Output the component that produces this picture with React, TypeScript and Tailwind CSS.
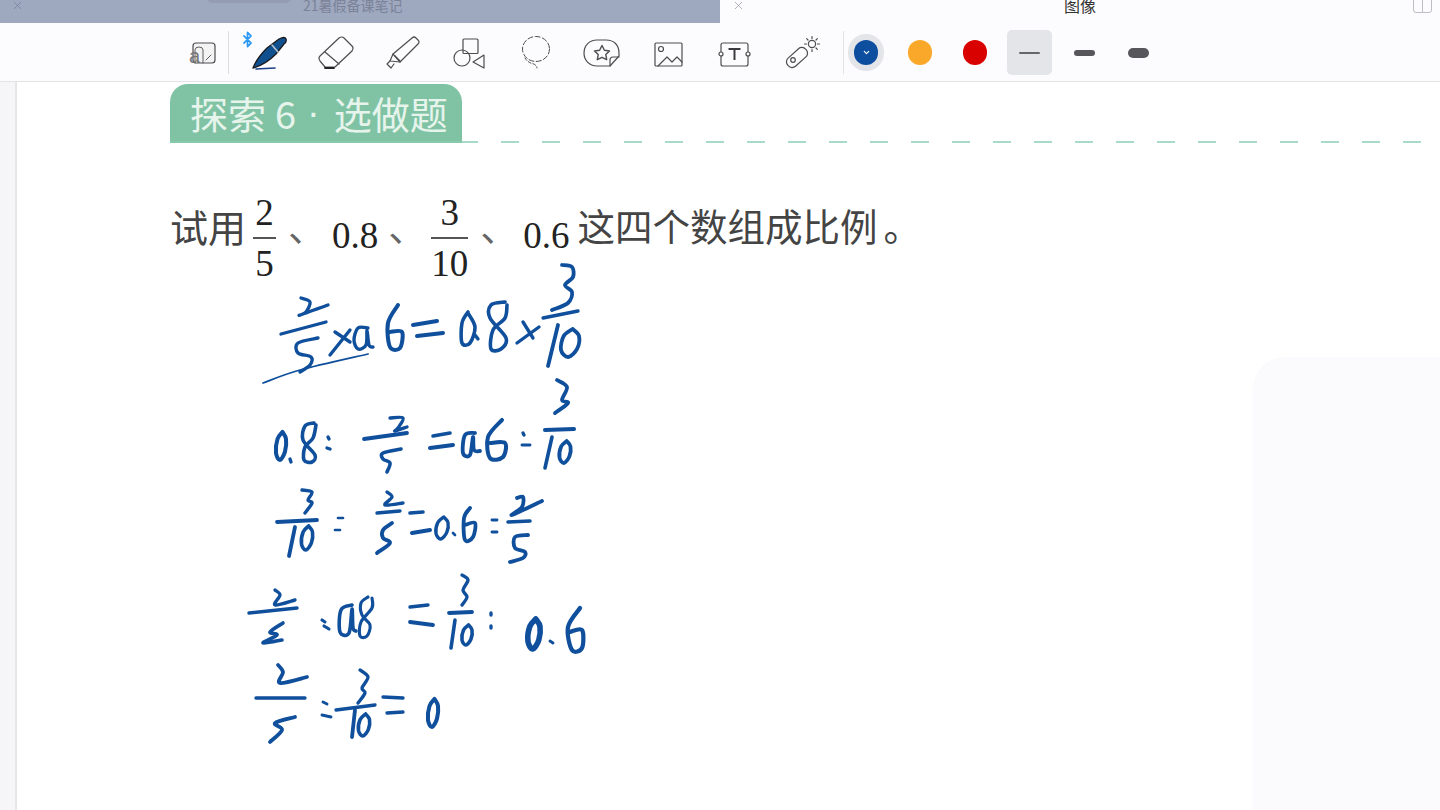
import React from "react";
import { Bluetooth, ChevronDown, X } from "lucide-react";

type P = [number, number];
const smooth = (p: P[]) => {
  if (p.length < 3) return `M${p[0][0]} ${p[0][1]} L${p[p.length - 1][0]} ${p[p.length - 1][1]}`;
  let d = `M${p[0][0]} ${p[0][1]}`;
  for (let i = 0; i < p.length - 1; i++) {
    const a = p[Math.max(0, i - 1)], b = p[i], c = p[i + 1], e = p[Math.min(p.length - 1, i + 2)];
    d += ` C${b[0] + (c[0] - a[0]) / 6} ${b[1] + (c[1] - a[1]) / 6} ${c[0] - (e[0] - b[0]) / 6} ${c[1] - (e[1] - b[1]) / 6} ${c[0]} ${c[1]}`;
  }
  return d;
};
const oval = (cx: number, cy: number, rx: number, ry: number): P[] => [
  [cx + rx * 0.3, cy - ry], [cx - rx * 0.7, cy - ry * 0.5], [cx - rx, cy + ry * 0.5], [cx - rx * 0.2, cy + ry],
  [cx + rx * 0.8, cy + ry * 0.4], [cx + rx, cy - ry * 0.5], [cx + rx * 0.3, cy - ry],
];

const strokes: { p: P[]; w?: number }[] = [
  // line 1
  { p: [[301, 298], [310, 302], [306, 312], [300, 315], [328, 305]], w: 3 },
  { p: [[281, 334], [326, 322]], w: 3 },
  { p: [[318, 338], [298, 343], [298, 353], [311, 357], [310, 365], [300, 372]], w: 3 },
  { p: [[263, 383], [300, 370], [368, 354]], w: 1.6 },
  { p: [[330, 355], [350, 330]], w: 3 },
  { p: [[335, 332], [350, 342]], w: 3 },
  { p: [[368, 328], [358, 328], [354, 340], [358, 349], [366, 345], [367, 330], [369, 345], [373, 347]], w: 3 },
  { p: [[398, 305], [388, 323], [390, 347], [400, 348], [402, 332], [390, 332]], w: 3.6 },
  { p: [[413, 325], [437, 321]], w: 3.6 },
  { p: [[417, 336], [443, 333]], w: 3.6 },
  { p: [[468, 312], [462, 323], [462, 343], [470, 343], [475, 327], [468, 313]], w: 3.2 },
  { p: [[475, 335], [478, 339]], w: 3 },
  { p: [[505, 302], [491, 305], [490, 318], [506, 338], [501, 349], [491, 349], [493, 330], [505, 318], [507, 305]], w: 3.2 },
  { p: [[517, 343], [539, 327]], w: 3 },
  { p: [[523, 322], [533, 338]], w: 3 },
  { p: [[562, 265], [572, 267], [573, 277], [565, 285], [572, 292], [568, 303], [552, 310]], w: 3.4 },
  { p: [[543, 318], [578, 311]], w: 3 },
  { p: [[558, 325], [548, 366]], w: 3.4 },
  { p: oval(570, 343, 9, 14), w: 3.4 },
  // line 2
  { p: oval(281, 446, 5, 14), w: 3.6 },
  { p: [[290, 459], [291, 462]], w: 3 },
  { p: [[314, 423], [305, 426], [303, 440], [315, 455], [312, 462], [304, 460], [305, 447], [313, 438], [316, 425]], w: 3.2 },
  { p: [[328, 437], [329, 439]], w: 3 },
  { p: [[327, 448], [330, 449]], w: 3 },
  { p: [[390, 418], [403, 418], [398, 428], [395, 431], [407, 427]], w: 3 },
  { p: [[364, 439], [407, 433]], w: 3.4 },
  { p: [[401, 449], [383, 453], [383, 459], [390, 463], [387, 472]], w: 3.2 },
  { p: [[433, 436], [450, 433]], w: 3.2 },
  { p: [[430, 448], [453, 445]], w: 3.6 },
  { p: [[475, 433], [465, 435], [463, 453], [470, 455], [473, 437], [474, 450], [480, 451]], w: 3.4 },
  { p: [[502, 420], [488, 437], [490, 458], [503, 457], [505, 443], [490, 443]], w: 3.6 },
  { p: [[523, 433], [524, 435]], w: 3 },
  { p: [[522, 445], [530, 445]], w: 2.6 },
  { p: [[557, 380], [567, 387], [562, 400], [568, 403], [555, 413]], w: 3.4 },
  { p: [[545, 430], [574, 429]], w: 3.6 },
  { p: [[552, 437], [545, 468]], w: 3.2 },
  { p: oval(565, 452, 5.5, 11), w: 3.4 },
  // line 3
  { p: [[302, 490], [312, 492], [308, 500], [312, 503], [305, 513]], w: 3 },
  { p: [[277, 522], [317, 520]], w: 3.4 },
  { p: [[295, 527], [289, 556]], w: 3.4 },
  { p: oval(307, 538, 5.5, 12), w: 3.2 },
  { p: [[338, 518], [343, 518]], w: 2.4 },
  { p: [[335, 530], [340, 530]], w: 2.4 },
  { p: [[387, 492], [392, 497], [385, 505], [403, 503]], w: 3 },
  { p: [[377, 513], [400, 511]], w: 3 },
  { p: [[392, 523], [383, 530], [383, 538], [390, 543], [377, 553]], w: 3.4 },
  { p: [[410, 513], [423, 512]], w: 3.2 },
  { p: [[412, 533], [430, 530]], w: 3.6 },
  { p: oval(442, 528, 6, 11), w: 3 },
  { p: [[453, 533], [455, 535]], w: 2.4 },
  { p: [[470, 508], [464, 518], [465, 540], [473, 537], [475, 523], [465, 525]], w: 3.4 },
  { p: [[492, 520], [497, 520]], w: 2.6 },
  { p: [[492, 532], [497, 532]], w: 2.6 },
  { p: [[517, 498], [523, 497], [522, 507], [512, 515], [542, 501]], w: 3.4 },
  { p: [[508, 522], [530, 521]], w: 3.2 },
  { p: [[528, 535], [515, 537], [515, 548], [525, 552], [523, 558], [510, 562]], w: 3.4 },
  // line 4
  { p: [[275, 590], [280, 595], [275, 605], [295, 600]], w: 3 },
  { p: [[249, 613], [297, 608]], w: 3 },
  { p: [[283, 623], [270, 632], [277, 635], [263, 643], [282, 640]], w: 3.2 },
  { p: [[322, 620], [325, 622]], w: 2.8 },
  { p: [[324, 626], [329, 629]], w: 2.8 },
  { p: [[352, 605], [341, 610], [340, 632], [349, 633], [352, 609], [353, 628], [356, 631]], w: 3.2 },
  { p: [[368, 597], [361, 603], [362, 615], [370, 625], [367, 636], [360, 636], [361, 622], [372, 608], [372, 598]], w: 2.8 },
  { p: [[410, 607], [428, 605]], w: 3 },
  { p: [[410, 622], [433, 625]], w: 3.4 },
  { p: [[462, 575], [468, 580], [463, 590], [467, 597], [462, 605]], w: 3 },
  { p: [[449, 613], [472, 612]], w: 3.4 },
  { p: [[455, 620], [451, 648]], w: 3.2 },
  { p: oval(467, 635, 5, 10), w: 3.2 },
  { p: [[491, 613], [491, 615]], w: 3 },
  { p: [[491, 626], [491, 628]], w: 3 },
  { p: oval(534, 634, 6, 15), w: 5 },
  { p: [[550, 641], [553, 643]], w: 2.6 },
  { p: [[580, 608], [568, 627], [572, 650], [582, 648], [582, 630], [570, 632]], w: 3.8 },
  // line 5
  { p: [[278, 665], [283, 672], [280, 683], [307, 677]], w: 3.4 },
  { p: [[256, 698], [305, 698]], w: 3 },
  { p: [[295, 717], [275, 723], [282, 730], [270, 742]], w: 3.4 },
  { p: [[323, 702], [327, 704]], w: 2.6 },
  { p: [[322, 715], [331, 717]], w: 2.6 },
  { p: [[360, 670], [368, 677], [362, 688], [365, 693], [358, 703]], w: 3 },
  { p: [[336, 710], [375, 705]], w: 3 },
  { p: [[355, 710], [352, 737]], w: 3.4 },
  { p: oval(364, 725, 5.5, 11), w: 3.2 },
  { p: [[383, 697], [403, 698]], w: 3 },
  { p: [[387, 713], [403, 712]], w: 3 },
  { p: oval(433, 713, 5, 14), w: 3.6 },
];

const Ico = ({ children }: { children: React.ReactNode }) => (
  <svg width="44" height="44" viewBox="0 0 44 44" fill="none" stroke="#4d4d50" strokeWidth="1.2" strokeLinejoin="round" strokeLinecap="round">
    {children}
  </svg>
);

const Btn = ({ w, children }: { w: string; children: React.ReactNode }) => (
  <div className={`relative flex h-full items-center justify-center ${w}`}>{children}</div>
);

const Frac = ({ top, bottom, w }: { top: string; bottom: string; w: string }) => (
  <div className={`flex flex-col items-center ${w} font-[family-name:'Liberation_Serif',serif] text-[37px] leading-[40px] text-[#222]`}>
    <span className="h-[44px]">{top}</span>
    <span className="h-[2px] w-full bg-[#555]" />
    <span className="mt-[5px] h-[40px]">{bottom}</span>
  </div>
);

const Num = ({ children }: { children: string }) => (
  <span className="mt-[23px] font-[family-name:'Liberation_Serif',serif] text-[37px] leading-[40px] text-[#222]">{children}</span>
);
const Dun = ({ className }: { className: string }) => (
  <span className={`mt-[12px] text-[38px] font-[family-name:'Noto_Sans_CJK_SC',sans-serif] leading-[40px] text-[#666] ${className}`}>、</span>
);

export default function App() {
  return (
    <div className="relative flex h-[810px] w-[1440px] flex-col overflow-hidden bg-white font-[family-name:'Noto_Sans_CJK_SC',sans-serif]">
      {/* tab strip */}
      <div className="flex h-[23px] shrink-0 bg-[#fcfcfe]">
        <div className="relative flex h-full w-[720px] items-center overflow-hidden bg-[#9ea8bf]">
          <X className="ml-[11px] -mt-[13px] text-[#79829a]" size={13} strokeWidth={1.4} />
          <div className="absolute left-[207px] -top-[8px] h-[11px] w-[84px] rounded-full bg-[#939cb3]" />
          <span className="ml-[279px] -mt-[14px] text-[14px] leading-[20px] text-[#7b8399]">21暑假备课笔记</span>
        </div>
        <div className="relative flex flex-1 items-center">
          <X className="ml-[12px] -mt-[13px] text-[#9a9aa0]" size={13} strokeWidth={1.4} />
          <span className="ml-[319px] -mt-[14px] text-[16px] leading-[20px] text-[#333]">图像</span>
          <div className="absolute left-[693px] -top-[6px] flex h-[19px] w-[19px] rounded-[3px] border border-[#bdbdc2]">
            <div className="h-full w-1/2 border-r border-[#bdbdc2]" />
          </div>
        </div>
      </div>

      {/* toolbar */}
      <div className="flex h-[59px] shrink-0 items-center border-b border-[#e4e4e6] bg-[#fcfcfe] pt-[1px] pl-[178px]">
        <Btn w="w-[50px]">
          <Ico>
            <rect x="12" y="12" width="22" height="20" rx="3" fill="#f3f3f4" />
            <path d="M14 32V19q0-3 4-3t4 3v13" strokeWidth="0.9" />
            <path d="M30 24l-5 5" strokeWidth="0.9" />
            <text x="8" y="32" fontSize="20" fontFamily="Liberation Sans" fill="#777" stroke="none">a</text>
          </Ico>
        </Btn>
        <div className="h-[43px] w-px bg-[#dedee0]" />
        <Btn w="ml-[7px] w-[66px]">
          <Bluetooth className="absolute left-[3px] top-[7px] text-[#2a98f5]" size={17} strokeWidth={2.4} />
          <Ico>
            <path d="M6 37C9 29 14 23 20 17L32 8Q38 5 39 8T37 13L29 23C22 30 14 35 6 37Z" fill="#10508f" stroke="#1a1a1c" strokeWidth="1.3" />
            <path d="M25 14L31 21" stroke="#b8c2cc" strokeWidth="1.6" />
            <path d="M9 38L28 37" stroke="#1c3f8a" strokeWidth="1.6" />
          </Ico>
        </Btn>
        <Btn w="w-[70px]">
          <Ico>
            <path d="M24 7Q27 5 29 7L37 15Q39 17 37 20L20 36H10L5 30Q3 27 5 25Z" />
            <path d="M10 21L24 33" />
            <path d="M10 37H19" strokeWidth="1.8" stroke="#222" />
          </Ico>
        </Btn>
        <Btn w="w-[62px]">
          <Ico>
            <path d="M31 7Q33 5 35 7L37 9Q39 11 37 13L19 31L12 23Z" />
            <path d="M12 23L9 30L19 31" />
            <path d="M9 30L6 33L10 37L13 33" />
            <path d="M14 25L19 30" />
          </Ico>
        </Btn>
        <Btn w="w-[70px]">
          <Ico>
            <rect x="16" y="8" width="15" height="14.500" rx="1" />
            <circle cx="15" cy="27" r="8" />
            <path d="M37 24L26 31L37 37Z" />
          </Ico>
        </Btn>
        <Btn w="w-[64px]">
          <Ico>
            <ellipse cx="22" cy="18" rx="13.500" ry="12.500" strokeDasharray="5 2.500" strokeWidth="1" />
            <path d="M11 27Q14 32 20 33Q23 35 23 37" strokeDasharray="3 2" strokeWidth="1" />
          </Ico>
        </Btn>
        <Btn w="w-[68px]">
          <Ico>
            <path d="M17 9H26C34 9 39 14 39 22V25L30 35H17C9 35 4 29 4 22S9 9 17 9Z" />
            <path d="M30 35V29Q30 26 33 26H39" />
            <path d="M22 14.500L24.400 19.300L29.500 20L25.800 23.600L26.700 28.700L22 26.300L17.300 28.700L18.200 23.600L14.500 20L19.600 19.300Z" strokeWidth="1.400" />
          </Ico>
        </Btn>
        <Btn w="w-[64px]">
          <Ico>
            <rect x="9" y="12" width="27" height="23" rx="1" />
            <circle cx="15" cy="18" r="2.500" />
            <path d="M12 35L21 26L26 31L31 26L36 31" />
          </Ico>
        </Btn>
        <Btn w="w-[68px]">
          <Ico>
            <rect x="9" y="12" width="27" height="23" rx="2" />
            <circle cx="9" cy="23" r="2" fill="#fcfcfe" />
            <circle cx="36" cy="23" r="2" fill="#fcfcfe" />
            <path d="M16.500 18H28.500M22.500 18V29" strokeWidth="2" stroke="#3c3c40" strokeLinecap="butt" />
          </Ico>
        </Btn>
        <Btn w="w-[68px]">
          <Ico>
            <rect x="5" y="21" width="24" height="11" rx="5" transform="rotate(-42 17 26.500)" />
            <circle cx="13" cy="29" r="2.300" />
            <circle cx="32" cy="13" r="3.600" />
            <path d="M32 5.500V7.500M32 18.500V20.500M24.500 13H26.500M37.500 13H39.500M26.700 7.700L28 9M36 17L37.300 18.300M37.300 7.700L36 9" />
          </Ico>
        </Btn>
        <div className="ml-[7px] h-[43px] w-px bg-[#e4e4e6]" />
        <div className="ml-[4px] flex h-[37px] w-[36px] items-center justify-center rounded-full bg-[#e4e5e8]">
          <div className="flex h-[25px] w-[24px] items-center justify-center rounded-full bg-[#0d4f9e]">
            <ChevronDown className="text-white" size={9} strokeWidth={3} />
          </div>
        </div>
        <div className="ml-[24px] h-[25px] w-[24px] rounded-full bg-[#f9a82a]" />
        <div className="ml-[31px] h-[25px] w-[24px] rounded-full bg-[#d90000]" />
        <div className="ml-[20px] flex h-[45px] w-[45px] items-center justify-center rounded-[5px] bg-[#e4e5e8]">
          <div className="h-[2px] w-[21px] rounded-full bg-[#66666a]" />
        </div>
        <div className="ml-[22px] h-[6px] w-[21px] rounded-full bg-[#57575b]" />
        <div className="ml-[33px] h-[10px] w-[21px] rounded-full bg-[#57575b]" />
      </div>

      {/* note area */}
      <div className="relative flex flex-1">
        <div className="w-[17px] shrink-0 border-r-2 border-[#e6e6e8] bg-[#f6f6f8]" />
        <div className="flex-1 pl-[153px]">
          <div className="mt-[2px] flex items-end">
            <div className="flex h-[59px] w-[292px] items-center rounded-t-[18px] border-b-2 border-[#86c9ab] bg-[#80c3a4] pl-[20px] text-[38px] leading-[58px] whitespace-nowrap text-[#e6f4ec]">
              <span>探索</span>
              <span className="ml-[9px]">6</span>
              <span className="ml-[11px] font-[family-name:'Liberation_Sans',sans-serif]">·</span>
              <span className="ml-[14px]">选做题</span>
            </div>
            <div className="flex gap-[23px]">
              {Array.from({ length: 24 }).map((_, i) => (
                <div key={i} className={`h-[2px] bg-[#a9dac7] ${i === 0 ? "w-[16px]" : "w-[18px]"}`} />
              ))}
            </div>
          </div>
          <div className="mt-[50px] flex items-start">
            <span className="mt-[8px] w-[83px] text-[38px] leading-[50px] whitespace-nowrap text-[#444]">试用</span>
            <Frac top="2" bottom="5" w="w-[23px]" />
            <Dun className="ml-[12px] w-[44px]" />
            <Num>0.8</Num>
            <Dun className="ml-[10px] w-[43px]" />
            <Frac top="3" bottom="10" w="w-[37px]" />
            <Dun className="ml-[12px] w-[43px]" />
            <Num>0.6</Num>
            <span className="mt-[5px] ml-[8px] flex text-[37.500px] leading-[54px] whitespace-nowrap text-[#444]">
              <span>这四个数组成比例</span>
              <span className="ml-[6px]">。</span>
            </span>
          </div>
        </div>
        {/* faint panel in the margin */}
        <div className="absolute right-0 bottom-0 h-[453px] w-[187px] rounded-tl-[32px] bg-[#fbfbfd]" />
        {/* pencil ink */}
        <svg className="absolute top-[-82px] left-0" width="1440" height="810" viewBox="0 0 1440 810" fill="none" stroke="#0f4f9c" strokeLinecap="round" strokeLinejoin="round">
          {strokes.map((s, i) => (
            <path key={i} d={smooth(s.p)} strokeWidth={(s.w ?? 3) * 1.12} />
          ))}
        </svg>
      </div>
    </div>
  );
}
